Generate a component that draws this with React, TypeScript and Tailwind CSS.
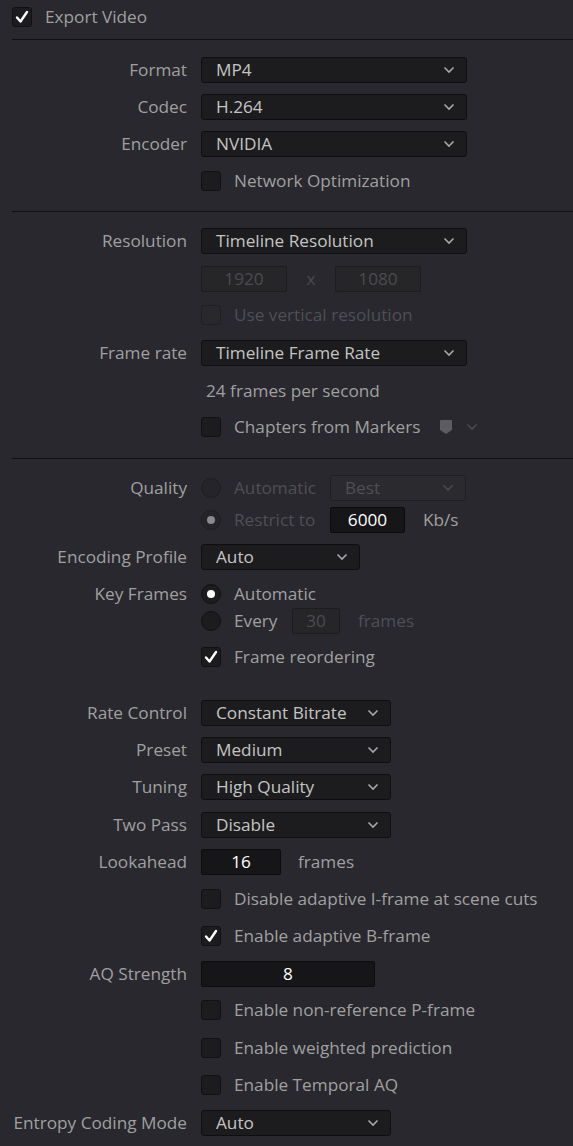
import React from 'react';

const Chevron: React.FC<{ dim?: boolean }> = ({ dim }) => (
  <svg width="12" height="8" viewBox="0 0 12 8" className={dim ? 'text-[#4a4a4f]' : 'text-[#a8a8a8]'}>
    <path d="M1.5 1.5 L6 6 L10.5 1.5" fill="none" stroke="currentColor" strokeWidth="1.6" />
  </svg>
);

const Check: React.FC = () => (
  <svg width="14" height="14" viewBox="0 0 14 14">
    <path d="M2 7.5 L5.5 11.5 L12 2" fill="none" stroke="#ffffff" strokeWidth="2.4" strokeLinecap="round" strokeLinejoin="round" />
  </svg>
);

const Box: React.FC<{ checked?: boolean; dim?: boolean }> = ({ checked, dim }) => (
  <span
    className={`w-[20px] h-[20px] rounded-[3px] border flex items-center justify-center shrink-0 ${
      dim ? 'bg-[#28282d] border-[#202024]' : 'bg-[#1c1c1e] border-[#111113]'
    }`}
  >
    {checked && <Check />}
  </span>
);

const Radio: React.FC<{ on?: boolean; dim?: boolean }> = ({ on, dim }) => (
  <span
    className={`w-[20px] h-[20px] rounded-full border flex items-center justify-center shrink-0 ${
      dim ? 'bg-[#252529] border-[#1e1e21]' : 'bg-[#1c1c1e] border-[#111113]'
    }`}
  >
    {on && <span className={`w-[8px] h-[8px] rounded-full ${dim ? 'bg-[#8a8a8e]' : 'bg-white'}`} />}
  </span>
);

const Select: React.FC<{ value: string; w: string; dim?: boolean }> = ({ value, w, dim }) => (
  <div
    className={`${w} h-[26px] rounded-[3px] border flex items-center justify-between pl-[14px] pr-[11px] ${
      dim ? 'bg-[#2a2a2f] border-[#1f1f23] text-[#4f4f55]' : 'bg-[#1c1c1e] border-[#0f0f11] text-[#c4c4c4]'
    }`}
  >
    <span>{value}</span>
    <Chevron dim={dim} />
  </div>
);

const Field: React.FC<{ value: string; w: string; dim?: boolean }> = ({ value, w, dim }) => (
  <div
    className={`${w} h-[26px] rounded-[2px] border flex items-center justify-center ${
      dim ? 'bg-[#262629] border-[#1d1d20] text-[#4b4b50]' : 'bg-[#161618] border-[#0c0c0d] text-white font-medium'
    }`}
  >
    {value}
  </div>
);

const Row: React.FC<{ label?: string; mt: string; children?: React.ReactNode }> = ({ label, mt, children }) => (
  <div className={`grid grid-cols-[187px_1fr] gap-x-[14px] h-[26px] items-center ${mt}`}>
    <div className="text-right text-[#a0a0a0] whitespace-nowrap">{label}</div>
    <div className="flex items-center">{children}</div>
  </div>
);

const CheckRow: React.FC<{ text: string; mt: string; checked?: boolean; dim?: boolean; children?: React.ReactNode }> = ({
  text,
  mt,
  checked,
  dim,
  children,
}) => (
  <Row mt={mt}>
    <Box checked={checked} dim={dim} />
    <span className={`ml-[13px] whitespace-nowrap ${dim ? 'text-[#4f4f55]' : 'text-[#a0a0a0]'}`}>{text}</span>
    {children}
  </Row>
);

const Divider: React.FC<{ mt: string }> = ({ mt }) => <div className={`ml-[12px] h-px bg-[#111113] ${mt}`} />;

const App: React.FC = () => {
  return (
    <div className="w-[573px] h-[1146px] bg-[#28282e] overflow-hidden text-[17.2px] leading-none pt-[4px]" style={{ fontFamily: '"Open Sans", sans-serif' }}>
      <div className="h-[26px] flex items-center pl-[12px]">
        <Box checked />
        <span className="ml-[13px] text-[#a0a0a0]">Export Video</span>
      </div>
      <Divider mt="mt-[9px]" />

      <Row label="Format" mt="mt-[17px]">
        <Select value="MP4" w="w-[266px]" />
      </Row>
      <Row label="Codec" mt="mt-[11px]">
        <Select value="H.264" w="w-[266px]" />
      </Row>
      <Row label="Encoder" mt="mt-[11px]">
        <Select value="NVIDIA" w="w-[266px]" />
      </Row>
      <CheckRow text="Network Optimization" mt="mt-[11px]" />
      <Divider mt="mt-[17px]" />

      <Row label="Resolution" mt="mt-[16px]">
        <Select value="Timeline Resolution" w="w-[266px]" />
      </Row>
      <Row mt="mt-[12px]">
        <Field value="1920" w="w-[86px]" dim />
        <span className="w-[48px] text-center text-[#4b4b50]">x</span>
        <Field value="1080" w="w-[86px]" dim />
      </Row>
      <CheckRow text="Use vertical resolution" mt="mt-[10px]" dim />
      <Row label="Frame rate" mt="mt-[12px]">
        <Select value="Timeline Frame Rate" w="w-[266px]" />
      </Row>
      <Row mt="mt-[12px]">
        <span className="ml-[5px] text-[#a0a0a0]">24 frames per second</span>
      </Row>
      <CheckRow text="Chapters from Markers" mt="mt-[10px]">
        <svg width="14" height="16" viewBox="0 0 14 16" className="ml-[19px]">
          <path d="M1 2 Q1 1 2 1 L12 1 Q13 1 13 2 L13 11 L7 15 L1 11 Z" fill="#5c5c62" />
        </svg>
        <span className="ml-[13px]">
          <Chevron dim />
        </span>
      </CheckRow>
      <Divider mt="mt-[18px]" />

      <Row label="Quality" mt="mt-[16px]">
        <Radio dim />
        <span className="ml-[13px] w-[96px] text-[#4f4f55]">Automatic</span>
        <Select value="Best" w="w-[136px]" dim />
      </Row>
      <Row mt="mt-[6px]">
        <Radio on dim />
        <span className="ml-[13px] w-[96px] text-[#4f4f55]">Restrict to</span>
        <Field value="6000" w="w-[75px]" />
        <span className="ml-[18px] text-[#a0a0a0]">Kb/s</span>
      </Row>
      <Row label="Encoding Profile" mt="mt-[11px]">
        <Select value="Auto" w="w-[159px]" />
      </Row>
      <Row label="Key Frames" mt="mt-[11px]">
        <Radio on />
        <span className="ml-[13px] text-[#a0a0a0]">Automatic</span>
      </Row>
      <Row mt="mt-px">
        <Radio />
        <span className="ml-[13px] w-[58px] text-[#a0a0a0]">Every</span>
        <Field value="30" w="w-[48px]" dim />
        <span className="ml-[18px] text-[#4f4f55]">frames</span>
      </Row>
      <CheckRow text="Frame reordering" mt="mt-[10px]" checked />

      <Row label="Rate Control" mt="mt-[30px]">
        <Select value="Constant Bitrate" w="w-[190px]" />
      </Row>
      <Row label="Preset" mt="mt-[11px]">
        <Select value="Medium" w="w-[190px]" />
      </Row>
      <Row label="Tuning" mt="mt-[11px]">
        <Select value="High Quality" w="w-[190px]" />
      </Row>
      <Row label="Two Pass" mt="mt-[12px]">
        <Select value="Disable" w="w-[190px]" />
      </Row>
      <Row label="Lookahead" mt="mt-[11px]">
        <Field value="16" w="w-[80px]" />
        <span className="ml-[17px] text-[#a0a0a0]">frames</span>
      </Row>
      <CheckRow text="Disable adaptive I-frame at scene cuts" mt="mt-[11px]" />
      <CheckRow text="Enable adaptive B-frame" mt="mt-[11px]" checked />
      <Row label="AQ Strength" mt="mt-[12px]">
        <Field value="8" w="w-[174px]" />
      </Row>
      <CheckRow text="Enable non-reference P-frame" mt="mt-[10px]" />
      <CheckRow text="Enable weighted prediction" mt="mt-[12px]" />
      <CheckRow text="Enable Temporal AQ" mt="mt-[11px]" />
      <Row label="Entropy Coding Mode" mt="mt-[12px]">
        <Select value="Auto" w="w-[190px]" />
      </Row>
    </div>
  );
};

export default App;
